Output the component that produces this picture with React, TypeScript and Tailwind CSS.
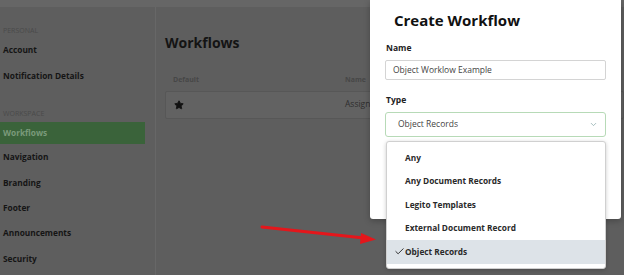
import React from 'react';
import { Check, ChevronDown, Star } from 'lucide-react';

const personal = ['Account', 'Notification Details'];
const workspace = ['Navigation', 'Branding', 'Footer', 'Announcements', 'Security'];
const types = ['Any', 'Any Document Records', 'Legito Templates', 'External Document Record', 'Object Records'];

export default function App() {
  return (
    <div className="relative w-[624px] h-[275px] overflow-hidden bg-[#5e5e5e] font-['Open_Sans',sans-serif]">
      <div className="h-[7px] bg-[#666666]" />
      <div className="flex h-[268px]">
        {/* Sidebar */}
        <aside className="w-[156px] border-r border-[#676767] pt-[18px]">
          <div className="h-[12px] flex items-center pl-[3px] text-[7px] text-[#4a4a4a] uppercase">Personal</div>
          {personal.map(item => (
            <div key={item} className="h-[26px] flex items-center pl-[3px] text-[8.3px] font-bold text-[#151515]">{item}</div>
          ))}
          <div className="mt-[19px] h-[12px] flex items-center pl-[3px] text-[7px] text-[#4a4a4a] uppercase">Workspace</div>
          <div className="mt-[2px] mr-[10px] h-[22px] flex items-center pl-[3px] bg-[#3a633a] text-[8.3px] font-bold text-[#7a9a7a]">Workflows</div>
          <div className="mt-[1px]">
            {workspace.map(item => (
              <div key={item} className="h-[25.3px] flex items-center pl-[3px] text-[8.3px] font-bold text-[#151515]">{item}</div>
            ))}
          </div>
        </aside>

        {/* Main */}
        <main className="flex-1 pl-[9px] pt-[24px]">
          <h1 className="h-[22px] flex items-center text-[14px] font-bold text-[#141414]">Workflows</h1>
          <div className="mt-[22px] flex text-[7px] font-bold text-[#474747]">
            <span className="pl-[8px] w-[180px]">Default</span>
            <span>Name</span>
          </div>
          <div className="mt-[5px] h-[28px] flex items-center border border-[#575757] bg-[#626262] rounded-[2px]">
            <span className="pl-[8px] w-[179px]">
              <Star size={10} fill="#111" stroke="#111" />
            </span>
            <span className="text-[8.5px] text-[#2e2e2e]">Assign</span>
          </div>
        </main>
      </div>

      {/* Modal */}
      <div className="absolute left-[370px] top-0 w-[251px] h-[219px] bg-white rounded-b-[3px] shadow-[0_2px_6px_rgba(0,0,0,0.25)]">
        <h2 className="pl-[24px] pt-[8px] h-[32px] flex items-center text-[15px] font-bold text-[#111]">Create Workflow</h2>
        <div className="px-[15px]">
          <div className="mt-[10px] h-[12px] flex items-center pl-[1px] text-[8.5px] font-bold text-[#222]">Name</div>
          <div className="mt-[6px] h-[20px] flex items-center border border-[#d4d4d4] rounded-[2px] pl-[7px] text-[8.5px] text-[#444]">Object Worklow Example</div>
          <div className="mt-[14px] h-[12px] flex items-center pl-[1px] text-[8.5px] font-bold text-[#222]">Type</div>
          <div className="mt-[6px] h-[25px] flex items-center justify-between border border-[#b7dab7] rounded-[3px] pl-[12px] pr-[7px] text-[8.5px] text-[#444]">
            <span>Object Records</span>
            <ChevronDown size={9} stroke="#8aa" />
          </div>
        </div>
      </div>

      {/* Dropdown */}
      <div className="absolute left-[386px] top-[141px] w-[220px] py-[4px] bg-white border border-[#d0d0d0] rounded-[3px] shadow-[0_1px_4px_rgba(0,0,0,0.2)]">
        {types.map(t => (
          <div
            key={t}
            className={`h-[23.5px] flex items-center pl-[7px] text-[8.3px] font-bold text-[#2a2a2a] ${t === 'Object Records' ? 'bg-[#dde3e8]' : ''}`}
          >
            <span className="w-[11px] flex items-center">
              {t === 'Object Records' && <Check size={11} strokeWidth={2} stroke="#222" />}
            </span>
            {t}
          </div>
        ))}
      </div>

      {/* Annotation arrow */}
      <svg className="absolute left-0 top-0" width="624" height="275">
        <line x1="262" y1="227" x2="364" y2="238" stroke="#e4161b" strokeWidth="3" strokeLinecap="round" />
        <polygon points="376,239.5 361,233 360,244" fill="#e4161b" />
      </svg>
    </div>
  );
}
